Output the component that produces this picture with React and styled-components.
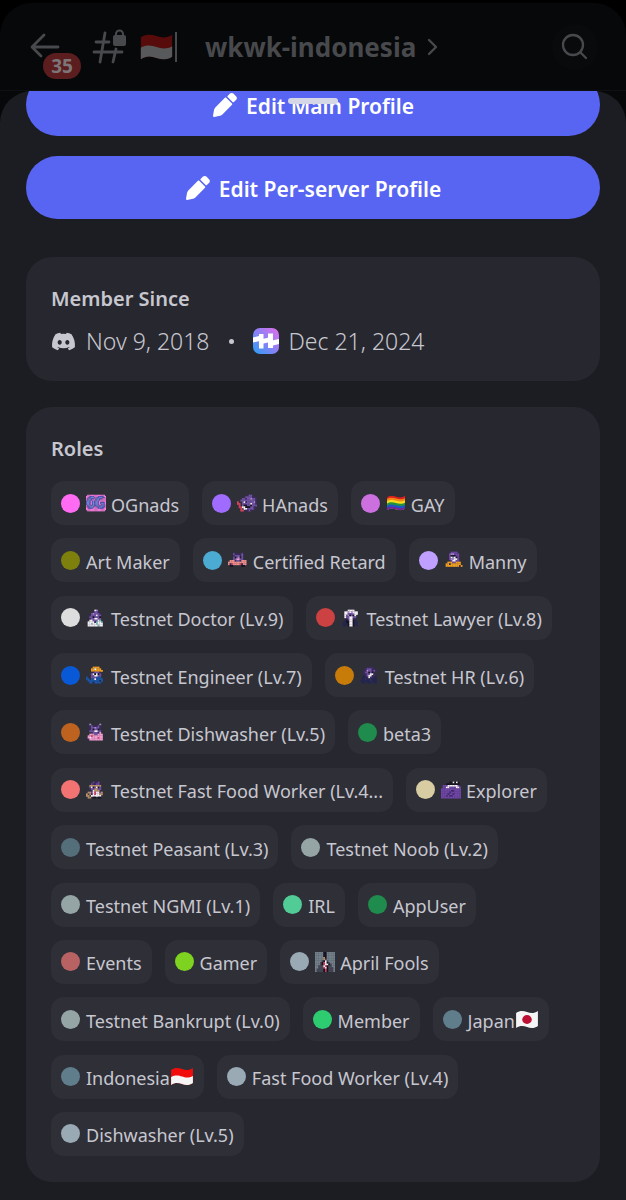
import React from "react";
import styled, { createGlobalStyle } from "styled-components";
import { FaDiscord } from "react-icons/fa";

const GlobalStyle = createGlobalStyle`
  * { box-sizing: border-box; }
  body {
    margin: 0;
    background: #000;
    color: #c7c7cf;
    font-family: "Noto Sans", "Open Sans", sans-serif;
  }
  button { font: inherit; color: inherit; border: 0; padding: 0; background: none; cursor: pointer; }
  h2, p, ul { margin: 0; padding: 0; }
  svg { display: block; flex: none; }
`;

const Screen = styled.div`
  min-height: 100vh;
  display: flex;
  flex-direction: column;
  padding-top: 3px;
  background: #000;
`;

const Header = styled.header`
  height: 88px;
  display: flex;
  align-items: center;
  padding: 0 28px 0 30px;
  border-radius: 32px 32px 0 0;
  border-bottom: 1px solid #0f1013;
  background: #07080a;
  color: #48494c;
`;

const BackButton = styled.button`
  position: relative;
  width: 32px;
  height: 32px;
  margin-right: 29px;
`;

const Badge = styled.span`
  position: absolute;
  left: 13px;
  top: 22px;
  width: 38px;
  height: 26px;
  border-radius: 13px;
  background: #5c1d1f;
  color: #7d7678;
  font-size: 19px;
  font-weight: 700;
  line-height: 26px;
  text-align: center;
`;

const ChannelButton = styled.button`
  flex: 1;
  min-width: 0;
  display: flex;
  align-items: center;
`;

const FlagSlot = styled.span`
  display: flex;
  align-items: center;
  margin: 0 28px 0 13px;
  padding-right: 1px;
  border-right: 2px solid #48494c;
  height: 30px;
`;

const ChannelName = styled.span`
  margin-right: 11px;
  font-size: 26px;
  font-weight: 700;
  line-height: 36px;
  white-space: nowrap;
`;

const SearchButton = styled.button`
  display: grid;
  place-items: center;
  width: 46px;
  height: 46px;
  border-radius: 50%;
  background: #090a0c;
`;

const SheetBackdrop = styled.div`
  flex: 1;
  background: #07080a;
`;

const Sheet = styled.main`
  position: relative;
  min-height: 100%;
  padding: 0 26px 18px;
  background: #1c1d22;
  border-radius: 32px 32px 0 0;
`;

const Handle = styled.div`
  position: absolute;
  left: 50%;
  top: 7px;
  width: 50px;
  height: 6px;
  margin-left: -25px;
  border-radius: 3px;
  background: #d6d7e6;
`;

const Actions = styled.div`
  display: flex;
  flex-direction: column;
  gap: 20px;
  overflow: hidden;
  margin-bottom: 38px;
`;

const ProfileButton = styled.button`
  display: flex;
  align-items: center;
  justify-content: center;
  gap: 8px;
  height: 63px;
  border-radius: 32px;
  background: #5865f2;
  color: #fff;
  font-size: 21px;
  font-weight: 600;
  line-height: 28px;

  &:first-child { margin-top: -18px; }
`;

const ButtonLabel = styled.span`
  padding-top: 3px;
`;

const Card = styled.section`
  padding: 26px 25px;
  border-radius: 26px;
  background: #27272f;

  & + & { margin-top: 26px; }
`;

const CardTitle = styled.h2`
  font-size: 20px;
  font-weight: 600;
  line-height: 32px;
`;

const Dates = styled.p`
  display: flex;
  align-items: center;
  flex-wrap: wrap;
  gap: 10px;
  padding-top: 12px;
  font-size: 23px;
  font-weight: 300;
  line-height: 28px;
`;

const Bullet = styled.span`
  width: 5px;
  height: 5px;
  margin: 0 9px;
  border-radius: 50%;
  background: #c7c7cf;
`;

const RoleList = styled.ul`
  display: flex;
  flex-wrap: wrap;
  align-content: space-between;
  gap: 13px;
  min-height: 675px;
  margin-top: 16px;
  list-style: none;
`;

const RoleChip = styled.li`
  display: flex;
  align-items: center;
  height: 44px;
  padding: 0 10px;
  border-radius: 13px;
  background: #2f2f38;
  font-size: 18px;
  font-weight: 400;
  line-height: 26px;
  white-space: nowrap;
`;

const Dot = styled.span`
  width: 19px;
  height: 19px;
  margin-right: 6px;
  border-radius: 50%;
  background: ${(p) => p.$color};
`;

const RoleIcon = styled.span`
  margin-right: 5px;
`;

const RoleName = styled.span`
  padding-top: 3px;
`;

const flagShape = "M1 4 C5 1 8 2 11 3 S17 5 21 2 V17 C17 20 14 19 11 18 S5 16 1 19 Z";
const FLAGS = {
  id: ["#f20d0d", "#f5f5f5"],
  idDim: ["#570b0b", "#58595a"],
  rainbow: ["#e01e1e", "#f28a13", "#f7dd1d", "#24923c", "#1c55c4", "#7a1f94"],
  jp: ["#f5f5f5"],
};

function Flag({ kind, width, height }) {
  const bands = FLAGS[kind];
  const id = "flag-" + kind;
  const step = 16 / bands.length;
  return (
    <svg width={width} height={height} viewBox="0 1 22 19" preserveAspectRatio="none" aria-hidden="true">
      <clipPath id={id}><path d={flagShape} /></clipPath>
      <g clipPath={`url(#${id})`}>
        {bands.map((c, i) => {
          const y = i === 0 ? -2 : 2.5 + i * step;
          return <path key={c} fill={c} d={`M0 ${y + 1} C5 ${y - 2} 8 ${y - 1} 11 ${y} S17 ${y + 2} 22 ${y - 1} V24 H0 Z`} />;
        })}
        {kind === "jp" && <circle cx="11" cy="10.5" r="4.4" fill="#bc0f34" />}
      </g>
    </svg>
  );
}

const PALETTE = {
  p: "#7252a5", d: "#3b2a5e", k: "#15131f", w: "#f3eef4", r: "#d8415e",
  o: "#f0a020", b: "#1b55a8", n: "#232650", m: "#f29bd0", s: "#f0908c",
  t: "#6fb7b5", l: "#a98bd0", g: "#74808a", y: "#454854", v: "#6f45a8", e: "#b99068",
  u: "#5a55bc", h: "#f47ddc", x: "#432a70", c: "#7c8ee6",
};

const SPRITES = {
  og: [
    ".hhhhhhhhhhhhhhh.",
    "hhhuuuuhhhuuuuuhh",
    "hhuucccuhuucccuuh",
    "huccuuuhuccuuuhhh",
    "huccuhhhuccuhhhhh",
    "uccuhucuccuhhhhhh",
    "uccuhucuccuhuuuuh",
    "uccuhucuccuhuccuh",
    "uccuhucuccuhhucuh",
    "huccuccuuccuuccuh",
    "huucccuhhuucccuuh",
    "hhuuuuhhhhuuuuuhh",
    "hhhhhhhhhhhhhhhhh",
    ".hhhhhhhhhhhhhhh.",
  ],
  ha: [
    "......dpp...", "....dppppdd.", "...ppdpplppd", "..pppppppppd", "r..pwdppppld", "rr.pppppwppd",
    ".r.pkkppkppp", ".rrwwkkkppd.", "..r.wwppppd.", "..rr.ddpd...",
  ],
  car: [
    "...d....d...", "...pddddp...", "...dpppdp...", "...pkplkp...", "...ppmmpp...",
    ".sssdppdsss.", "sssssssssss.", "sdrssssrdss.", ".kk.....kk..", "............",
  ],
  manny: [
    "....vvvv....", "...vllvvv...", "...vkkkvv...", "...vwlwkv...", "...vllwwv...",
    "....vwwvv...", "..ooovvooo..", ".oodoooooo..", ".oooooooodo.", "............",
  ],
  doctor: [
    ".....wl.....", "....dppd....", "...plpppd...", "..dpppwpp...", "..ppkpppk...", "..dppwwpp...",
    "..wwpppwt...", ".wwwwdtwwt..", ".wwtwwtwww..", ".wwwwwwtww..",
  ],
  lawyer: [
    "....wwww....", "..wwlwlwww..", "..wwppplww..", "..wplkpkw...", "..wppwwpp...", "...dpwwd....",
    "..nkdwwkn...", ".nnkkwwknn..", ".nnnkwwknn..", ".nn.kwwk.n..",
  ],
  engineer: [
    "....oooo....", "...oowooo...", "...ooooooo..", "...ddpppd...", "..dpwkwkp...", "...ppwwpp...",
    "b..pppbbb...", "bb.bbwbbbb..", ".bbbbbbbnb..", "..bbnbbbb...",
  ],
  hr: [
    "....dddd....", "...dpppdd...", "..ddlppdpd..", "..dppkpkd...", "..ddppwwd...", "..ndpwwdd...",
    ".nnndwddnn..", ".nndnndnnn..", "nnnnnndnnn..", ".nn.nnn.nn..",
  ],
  dish: [
    "..l.....l...", "..dpdddpd...", "..dpplppd...", "..dpkppkd...", "..pppwwpp...", "...dpppdm...",
    "..mmsppmmm..", ".mmrmmmmmm..", ".mwmmmmrmm..", ".dmmmmmmmm..",
  ],
  food: [
    "....vddv....", "...vddvv....", "..eeeeeee...", "..pwkpwkp...", "..dppeepp...", "...dweee....",
    ".eevwrwwve..", "e.edwrwwee..", "ee.wwwwww...", ".ee.kk.kk...",
  ],
  explorer: [
    ".....kkwkwk.", "...kkkkkkkk.", ".vvvwwwwwwv.", ".vvwwvvvvwwv", "vvvvvvvvvvvv", "vvvvvvxxvvvv",
    "vvvvvxvvvvvv", "vvvvxvvxvvvv", "vvvxvxxvvvvv", "vvvvvvvvvvvv",
  ],
  april: [
    "gggggkkggggg", "gggggkkggggg", "gggggkkggggg", "gggggekggggg", "gggggeyggggg", "ggggykwygggg",
    "gggykrwkyggg", "gggykrwwkygg", "ggyyywrkyygg", "ggyyyrwkyyyg", "gyyyykrkyyyg", "gyyyykrkyyyg",
  ],
};

function Sprite({ name }) {
  const rows = SPRITES[name];
  const cols = rows[0].length;
  const top = -(cols - rows.length) / 2;
  return (
    <svg width="20" height="20" viewBox={`0 ${top} ${cols} ${cols}`} aria-hidden="true">
      {rows.flatMap((row, y) =>
        [...row].map((c, x) =>
          c === "." ? null : <rect key={`${x}-${y}`} x={x} y={y} width="1.1" height="1.1" fill={PALETTE[c]} />
        )
      )}
    </svg>
  );
}

const Pencil = () => (
  <svg width="26" height="26" viewBox="0 0 26 26" fill="#fff" aria-hidden="true">
    <path d="M15.6 3.9 L18 1.6 C19 .7 20.4 .7 21.4 1.6 L24.2 4.4 C25.1 5.4 25.1 6.7 24.2 7.7 L21.9 10 C21.5 10.4 21 10.4 20.6 10 L15.6 5.1 C15.2 4.7 15.2 4.3 15.6 3.9 Z" />
    <path d="M12.9 5.7 C13.3 5.3 13.8 5.3 14.2 5.7 L20 11.5 C20.4 11.9 20.4 12.4 20 12.8 L10.4 22.4 C9.8 23 9 23.6 8.1 23.8 L2.1 24.9 C1.4 25 .9 24.5 1 23.8 L2 18.1 C2.2 17.2 2.7 16.2 3.3 15.5 Z" />
  </svg>
);

const LockedHash = () => (
  <svg width="35" height="36" viewBox="0 0 35 36" fill="none" stroke="currentColor" strokeWidth="2.8" strokeLinecap="round" aria-hidden="true">
    <path d="M14 4 L9 33 M25 20 L22 33 M5 13 H18 M3 23 H31" />
    <rect x="22" y="6" width="13" height="11" rx="2" fill="currentColor" stroke="none" />
    <path d="M25 7 V5 a3.5 3.5 0 0 1 7 0 V7" strokeWidth="2" />
  </svg>
);

const ServerLogo = () => (
  <svg width="26" height="26" viewBox="0 0 26 26" aria-hidden="true">
    <defs>
      <linearGradient id="server" x1="1" y1="0" x2="0" y2="1">
        <stop offset="0" stopColor="#e56de8" />
        <stop offset=".5" stopColor="#8b80f6" />
        <stop offset="1" stopColor="#27a0f4" />
      </linearGradient>
    </defs>
    <rect width="26" height="26" rx="7" fill="url(#server)" />
    <path fill="#fff" d="M0 9.5 L6 8 V6 H10.5 V10.7 L15 9.7 V5.5 H20 V12.2 L26 11 V16 L20 17.4 V20 H15 V14.5 L10.5 15.6 V20.5 H6 V13.2 L0 14.5 Z" />
  </svg>
);

const ROLES = [
  { name: "OGnads", color: "#ff6bf3", sprite: "og" },
  { name: "HAnads", color: "#a06bff", sprite: "ha" },
  { name: "GAY", color: "#cc70e0", flag: "rainbow" },
  { name: "Art Maker", color: "#7e800e" },
  { name: "Certified Retard", color: "#4cabd2", sprite: "car" },
  { name: "Manny", color: "#bf9fff", sprite: "manny" },
  { name: "Testnet Doctor (Lv.9)", color: "#dddddd", sprite: "doctor" },
  { name: "Testnet Lawyer (Lv.8)", color: "#cc4141", sprite: "lawyer" },
  { name: "Testnet Engineer (Lv.7)", color: "#0959d6", sprite: "engineer" },
  { name: "Testnet HR (Lv.6)", color: "#c77c0a", sprite: "hr" },
  { name: "Testnet Dishwasher (Lv.5)", color: "#bd631f", sprite: "dish" },
  { name: "beta3", color: "#1f8b4c" },
  { name: "Testnet Fast Food Worker (Lv.4...", color: "#f37373", sprite: "food" },
  { name: "Explorer", color: "#d8cca2", sprite: "explorer" },
  { name: "Testnet Peasant (Lv.3)", color: "#546e7a" },
  { name: "Testnet Noob (Lv.2)", color: "#95a5a6" },
  { name: "Testnet NGMI (Lv.1)", color: "#95a5a6" },
  { name: "IRL", color: "#52cc96" },
  { name: "AppUser", color: "#1f8b4c" },
  { name: "Events", color: "#b86264" },
  { name: "Gamer", color: "#7ed321" },
  { name: "April Fools", color: "#99aab5", sprite: "april" },
  { name: "Testnet Bankrupt (Lv.0)", color: "#95a5a6" },
  { name: "Member", color: "#2ecc71" },
  { name: "Japan", color: "#607d8b", tail: "jp" },
  { name: "Indonesia", color: "#607d8b", tail: "id" },
  { name: "Fast Food Worker (Lv.4)", color: "#99aab5" },
  { name: "Dishwasher (Lv.5)", color: "#99aab5" },
];

export default function App() {
  return (
    <Screen>
      <GlobalStyle />
      <Header>
        <BackButton aria-label="Back">
          <svg width="32" height="32" viewBox="0 0 32 32" fill="none" stroke="currentColor" strokeWidth="2.8" strokeLinecap="round" strokeLinejoin="round" aria-hidden="true">
            <path d="M28 16 H3 M14 4 L2 16 L11 25" />
          </svg>
          <Badge>35</Badge>
        </BackButton>
        <ChannelButton>
          <LockedHash />
          <FlagSlot><Flag kind="idDim" width={35} height={28} /></FlagSlot>
          <ChannelName>wkwk-indonesia</ChannelName>
          <svg width="12" height="18" viewBox="0 0 12 18" fill="none" stroke="currentColor" strokeWidth="2.4" strokeLinecap="round" strokeLinejoin="round" aria-hidden="true">
            <path d="M2 2 L9 9 L2 16" />
          </svg>
        </ChannelButton>
        <SearchButton aria-label="Search">
          <svg width="28" height="28" viewBox="0 0 28 28" fill="none" stroke="currentColor" strokeWidth="2.3" strokeLinecap="round" aria-hidden="true">
            <circle cx="12" cy="12" r="10" /><path d="M19.5 19.5 L25 25" />
          </svg>
        </SearchButton>
      </Header>
      <SheetBackdrop>
        <Sheet>
          <Actions>
            <ProfileButton><Pencil /><ButtonLabel>Edit Main Profile</ButtonLabel></ProfileButton>
            <ProfileButton><Pencil /><ButtonLabel>Edit Per-server Profile</ButtonLabel></ProfileButton>
          </Actions>
          <Handle />
          <Card>
            <CardTitle>Member Since</CardTitle>
            <Dates>
              <FaDiscord size={25} aria-hidden="true" />
              <span>Nov 9, 2018</span>
              <Bullet />
              <ServerLogo />
              <span>Dec 21, 2024</span>
            </Dates>
          </Card>
          <Card>
            <CardTitle>Roles</CardTitle>
            <RoleList>
              {ROLES.map((role) => (
                <RoleChip key={role.name}>
                  <Dot $color={role.color} />
                  {role.sprite && <RoleIcon><Sprite name={role.sprite} /></RoleIcon>}
                  {role.flag && <RoleIcon><Flag kind={role.flag} width={20} height={16} /></RoleIcon>}
                  <RoleName>{role.name}</RoleName>
                  {role.tail && <Flag kind={role.tail} width={24} height={19} />}
                </RoleChip>
              ))}
            </RoleList>
          </Card>
        </Sheet>
      </SheetBackdrop>
    </Screen>
  );
}
